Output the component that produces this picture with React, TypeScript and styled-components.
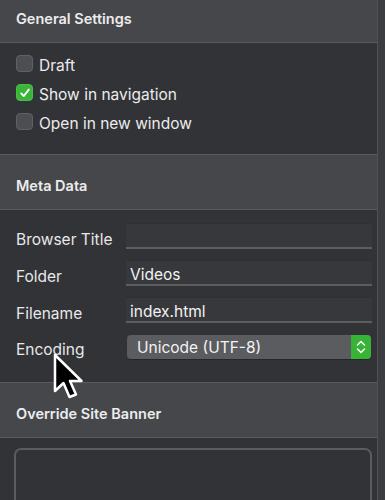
import React from "react";
import styled, { createGlobalStyle } from "styled-components";

const Global = createGlobalStyle`
  html, body { margin: 0; padding: 0; background: #323337; overflow: hidden; }
  body { font-family: Inter, "Noto Sans", sans-serif; -webkit-font-smoothing: antialiased; }
`;

const Frame = styled.div`
  position: relative;
  width: 385px;
  height: 500px;
  overflow: hidden;
  display: flex;
  background: #323337;
`;

const Main = styled.div`
  flex: 1;
  display: flex;
  flex-direction: column;
  margin-top: -12px;
  & > * { flex-shrink: 0; }
`;

const ScrollTrack = styled.div`
  width: 7px;
  background: #3c3d41;
  border-left: 1px solid #505155;
`;

const SectionHeader = styled.div`
  height: 55px;
  box-sizing: border-box;
  display: flex;
  align-items: center;
  padding: 6px 16px 0;
  background: #46474b;
  border-bottom: 1px solid #5a5b5f;
  color: #ececec;
  font-size: 14.5px;
  font-weight: 600;
`;

const CheckList = styled.div`
  display: flex;
  flex-direction: column;
  padding: 6px 16px 18px;
  border-bottom: 1px solid #5a5b5f;
`;

const CheckRow = styled.label`
  height: 29px;
  display: flex;
  align-items: center;
  gap: 6px;
  color: #ececec;
  font-size: 15.5px;
`;

const CheckText = styled.span`
  padding-top: 3px;
`;

const Box = styled.span<{ $checked?: boolean }>`
  width: 17px;
  height: 17px;
  box-sizing: border-box;
  border-radius: 4px;
  display: flex;
  align-items: center;
  justify-content: center;
  background: ${(p) => (p.$checked ? "#3bb43a" : "#4d4e52")};
  border: 1px solid ${(p) => (p.$checked ? "#47c046" : "#606165")};
`;

const FormGrid = styled.div`
  display: grid;
  grid-template-columns: 110px 1fr;
  row-gap: 11px;
  align-items: center;
  padding: 13px 5px 23px 16px;
  border-bottom: 1px solid #5a5b5f;
`;

const Label = styled.span`
  color: #e8e8e8;
  font-size: 15.5px;
  padding-top: 6px;
`;

const Field = styled.div`
  height: 26px;
  box-sizing: border-box;
  background: #37383c;
  border-top: 1px solid #2f3034;
  border-bottom: 2px solid #5c5d61;
  display: flex;
  align-items: center;
  padding: 3px 4px 0;
  color: #f2f2f2;
  font-size: 15.5px;
`;

const Select = styled.div`
  height: 24px;
  margin-left: 1px;
  margin-right: 1px;
  border-radius: 4px;
  background: #5b5c60;
  display: flex;
  align-items: center;
  overflow: hidden;
  color: #f2f2f2;
  font-size: 15.5px;
  box-shadow: 0 1px 0 rgba(0,0,0,0.25);
`;

const SelectText = styled.span`
  flex: 1;
  padding: 2px 0 0 10px;
`;

const Stepper = styled.span`
  width: 20px;
  height: 100%;
  background: #37b335;
  display: flex;
  align-items: center;
  justify-content: center;
`;

const BannerBody = styled.div`
  padding: 10px 5px 0 14px;
`;

const BannerBox = styled.div`
  height: 80px;
  box-sizing: border-box;
  border: 2px solid #5b5c60;
  border-radius: 7px;
  background: #323337;
`;

const Cursor = styled.svg`
  position: absolute;
  left: 52px;
  top: 353px;
`;

const Check = () => (
  <svg width="12" height="12" viewBox="0 0 12 12">
    <path d="M2.2 6.4 L4.8 9 L9.8 2.6" fill="none" stroke="#fff" strokeWidth="1.9" strokeLinecap="round" strokeLinejoin="round" />
  </svg>
);

const Chevrons = () => (
  <svg width="10" height="16" viewBox="0 0 10 16">
    <path d="M1.5 6 L5 2.5 L8.5 6 M1.5 10 L5 13.5 L8.5 10" fill="none" stroke="#fff" strokeWidth="1.5" strokeLinecap="round" strokeLinejoin="round" />
  </svg>
);

export default function App() {
  return (
    <>
      <Global />
      <Frame>
        <Main>
          <SectionHeader>General Settings</SectionHeader>
          <CheckList>
            <CheckRow><Box /><CheckText>Draft</CheckText></CheckRow>
            <CheckRow><Box $checked><Check /></Box><CheckText>Show in navigation</CheckText></CheckRow>
            <CheckRow><Box /><CheckText>Open in new window</CheckText></CheckRow>
          </CheckList>
          <SectionHeader>Meta Data</SectionHeader>
          <FormGrid>
            <Label>Browser Title</Label>
            <Field />
            <Label>Folder</Label>
            <Field>Videos</Field>
            <Label>Filename</Label>
            <Field>index.html</Field>
            <Label>Encoding</Label>
            <Select>
              <SelectText>Unicode (UTF-8)</SelectText>
              <Stepper><Chevrons /></Stepper>
            </Select>
          </FormGrid>
          <SectionHeader>Override Site Banner</SectionHeader>
          <BannerBody>
            <BannerBox />
          </BannerBody>
        </Main>
        <ScrollTrack />
        <Cursor width="36" height="52" viewBox="0 0 36 52">
          <path d="M3 2 L3 38 L11.5 30 L17.5 44 L24 41.5 L18 28 L29.5 28 Z" fill="#000" stroke="#fff" strokeWidth="2.5" strokeLinejoin="round" />
        </Cursor>
      </Frame>
    </>
  );
}
